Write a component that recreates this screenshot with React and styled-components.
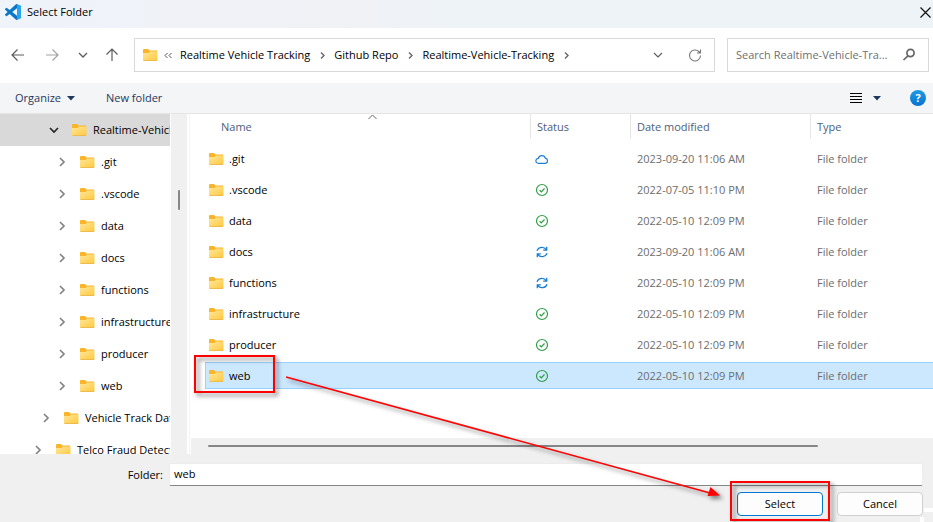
import React from "react";
import styled, { createGlobalStyle } from "styled-components";

const GlobalStyle = createGlobalStyle`
  *, *::before, *::after { box-sizing: border-box; }
  body { margin: 0; }
  button, input { font: inherit; color: inherit; }
  svg { flex: none; }
`;

const Dialog = styled.main`
  position: relative;
  display: flex;
  flex-direction: column;
  height: 100vh;
  overflow: hidden;
  background: #fff;
  color: #000;
  font: 11px/16px "Segoe UI", "Open Sans", "Noto Sans", sans-serif;
`;

const TitleBar = styled.header`
  display: flex;
  align-items: center;
  gap: 6px;
  height: 28px;
  padding: 0 2px 4px 5px;
  background: linear-gradient(90deg, #eff3fa, #f1f2f6 36%, #edf3f7 50%);
`;

const Title = styled.h1`
  flex: 1;
  margin: 0;
  font-size: inherit;
  font-weight: 400;
`;

const IconButton = styled.button`
  display: flex;
  align-items: center;
  justify-content: center;
  flex: none;
  width: ${(p) => p.$width || 16}px;
  height: 16px;
  padding: 0;
  border: 0;
  background: none;
  color: ${(p) => p.$color || "#5c5c5c"};
`;

const NavBar = styled.nav`
  display: flex;
  align-items: center;
  height: 55px;
  padding: 0 4px 1px 9px;
`;

const History = styled.div`
  display: flex;
  gap: 15px;
  width: 125px;
`;

const AddressBar = styled.div`
  display: flex;
  align-items: center;
  flex: 1;
  min-width: 0;
  height: 34px;
  margin-right: 12px;
  padding: 0 11px 0 8px;
  border: 1px solid #d9d9d9;
`;

const Crumbs = styled.ol`
  display: flex;
  align-items: center;
  flex: 1;
  min-width: 0;
  margin: 0 0 0 5px;
  padding: 0;
  overflow: hidden;
  list-style: none;
  white-space: nowrap;
`;

const Crumb = styled.li`
  display: flex;
  align-items: center;
  gap: 7px;
  margin-right: 6px;
`;

const CrumbLink = styled.a`
  color: #000;
  text-decoration: none;
`;

const AddressActions = styled.div`
  display: flex;
  gap: 21px;
`;

const SearchBox = styled.label`
  display: flex;
  align-items: center;
  gap: 8px;
  width: 202px;
  height: 34px;
  padding: 0 12px 0 8px;
  border: 1px solid #d9d9d9;
  color: #6b6b6b;
`;

const SearchInput = styled.input`
  flex: 1;
  min-width: 0;
  padding: 0;
  border: 0;
  outline: 0;
  background: none;
  text-overflow: ellipsis;
  &::placeholder { color: #6f6f6f; opacity: 1; }
`;

const Toolbar = styled.div`
  display: flex;
  align-items: center;
  height: 31px;
  padding: 0 7px 0 15px;
  border-bottom: 1px solid #e5e5e5;
  background: #f4f5f7;
`;

const ToolButton = styled.button`
  display: flex;
  align-items: center;
  gap: 6px;
  margin-right: 31px;
  padding: 0;
  border: 0;
  background: none;
  color: #1e395b;
`;

const ToolbarEnd = styled.div`
  display: flex;
  gap: 7px;
  margin-left: auto;
`;

const HelpButton = styled(IconButton)`
  margin-left: 20px;
  border-radius: 50%;
  background: linear-gradient(#1f9be4, #0873cf);
  color: #fff;
  font-weight: 700;
`;

const Browser = styled.div`
  display: flex;
  flex: 1;
  min-height: 0;
`;

const Tree = styled.ul`
  width: 170px;
  margin: 0;
  padding: 0;
  overflow: hidden;
  list-style: none;
`;

const TreeItem = styled.li`
  display: flex;
  align-items: center;
  height: 32px;
  padding-left: ${(p) => p.$indent}px;
  background: ${(p) => (p.$active ? "#d9d9d9" : "transparent")};
  white-space: nowrap;
`;

const TreeLabel = styled.span`
  margin-left: 6px;
`;

const Twisty = styled(IconButton)`
  margin-right: 12px;
`;

const TreeScroll = styled.div`
  width: 16px;
  margin-left: 1px;
  padding: 76px 7px 0 7px;
  background: #f0f0f0;
`;

const TreeThumb = styled.div`
  height: 20px;
  border-radius: 1px;
  background: #868686;
`;

const Splitter = styled.div`
  width: 4px;
  border-left: 2px solid #fff;
  border-right: 1px solid #fff;
  background: #f3f3f3;
`;

const FilePane = styled.section`
  display: flex;
  flex-direction: column;
  flex: 1;
  min-width: 0;
`;

const FileTable = styled.table`
  display: block;
  flex: 1;
  margin-left: 14px;
`;

const FileHead = styled.thead`
  position: relative;
  display: block;
`;

const FileBody = styled.tbody`
  display: grid;
  gap: 4px;
  padding-top: 6px;
`;

const Row = styled.tr`
  position: relative;
  display: grid;
  grid-template-columns: 325px 100px 180px 1fr;
`;

const HeadCell = styled.th`
  display: flex;
  align-items: center;
  height: 25px;
  padding-left: ${(p) => (p.$first ? 16 : 6)}px;
  border-left: ${(p) => (p.$first ? "0" : "1px solid #e5e5e5")};
  color: #4c607a;
  font-weight: 400;
`;

const SortMark = styled.span`
  position: absolute;
  top: 0;
  left: 163px;
  display: flex;
`;

const FileRow = styled(Row)`
  height: 27px;
  background: ${(p) => (p.$selected ? "#cce8ff" : "transparent")};
  box-shadow: ${(p) =>
    p.$selected ? "inset 1px 0 #99d1ff, inset 0 1px #99d1ff, inset 0 -1px #99d1ff" : "none"};
`;

const Cell = styled.td`
  display: flex;
  align-items: center;
  gap: 5px;
  padding: 0 0 0 ${(p) => p.$pad || 7}px;
  color: ${(p) => (p.$strong ? "#000" : "#6d6d6d")};
`;

const Callout = styled.span`
  position: absolute;
  inset: ${(p) => p.$inset};
  width: ${(p) => p.$width || "auto"};
  border: 2px solid #ff0000;
  filter: drop-shadow(3px 3px 2px rgba(0, 0, 0, 0.5));
  pointer-events: none;
`;

const FileScroll = styled.div`
  height: 16px;
  padding: 7px 115px 0 17px;
  background: #f0f0f0;
`;

const FileThumb = styled.div`
  height: 2px;
  border-radius: 1px;
  background: #868686;
`;

const Footer = styled.form`
  position: relative;
  display: flex;
  flex-direction: column;
  gap: 6px;
  height: 68px;
  padding: 9px 10px 0 0;
  background: #f0f0f0;
`;

const Field = styled.label`
  display: grid;
  grid-template-columns: 163px 1fr;
  align-items: center;
  column-gap: 6px;
`;

const FieldLabel = styled.span`
  text-align: right;
`;

const FieldInput = styled.input`
  height: 23px;
  min-width: 0;
  padding: 0 4px 2px;
  border: 1px solid #ececec;
  border-bottom-color: #868686;
  border-radius: 2px;
  outline: 0;
  background: #fff;
`;

const Actions = styled.div`
  display: flex;
  justify-content: flex-end;
  gap: 14px;
`;

const ActionButton = styled.button`
  position: relative;
  width: 86px;
  height: 24px;
  padding: 0;
  border: 1px solid ${(p) => (p.$primary ? "#0078d4" : "#d0d0d0")};
  border-radius: 4px;
  background: #fdfdfd;
`;

const Grip = styled.svg`
  position: absolute;
  right: 0;
  bottom: 0;
`;

const Pointer = styled.div`
  position: absolute;
  left: 286px;
  right: 213px;
  bottom: 26px;
  height: 120px;
  pointer-events: none;
  svg {
    display: block;
    width: 100%;
    height: 100%;
    overflow: visible;
    filter: drop-shadow(3px 3px 2px rgba(0, 0, 0, 0.5));
  }
`;

const Stroke = ({ d, size = 16, w = 1, color = "currentColor" }) => (
  <svg width={size} height={size} viewBox={`0 0 ${size} ${size}`} fill="none" stroke={color} strokeWidth={w} aria-hidden="true">
    <path d={d} />
  </svg>
);

const Caret = () => (
  <svg width="8" height="5" viewBox="0 0 8 5" aria-hidden="true">
    <path d="M0 0h8L4 4.5z" fill="#1e395b" />
  </svg>
);

const FolderIcon = () => (
  <svg width="15" height="12" viewBox="0 0 15 12" aria-hidden="true">
    <defs>
      <linearGradient id="folder" x1="0" y1="0" x2="1" y2="1">
        <stop offset="0" stopColor="#ffe79b" />
        <stop offset="1" stopColor="#ffc83d" />
      </linearGradient>
    </defs>
    <path d="M0 1q0-1 1-1h4l1.500 1.500H14V5H0z" fill="#f9b52a" />
    <path d="M0 4h5.500L7 2.500h7.500V11q0 1-1 1H1q-1 0-1-1z" fill="url(#folder)" />
    <path d="M.5 11.500h13.500" stroke="#eab54a" strokeWidth=".8" />
  </svg>
);

const CodeLogo = () => (
  <svg width="16" height="16" viewBox="0 0 24 24" aria-hidden="true">
    <path
      fill="#0a78c4"
      d="M23.15 2.587L18.21.21a1.494 1.494 0 0 0-1.705.29l-9.46 8.63-4.12-3.128a.999.999 0 0 0-1.276.057L.327 7.261A1 1 0 0 0 .326 8.74L3.899 12 .326 15.26a1 1 0 0 0 .001 1.479L1.65 17.94a.999.999 0 0 0 1.276.057l4.12-3.128 9.46 8.63a1.492 1.492 0 0 0 1.704.29l4.942-2.377A1.5 1.5 0 0 0 24 20.06V3.939a1.5 1.5 0 0 0-.85-1.352zm-5.146 14.861L10.826 12l7.178-5.448v10.896z"
    />
    <path fill="#27a5ee" d="M18 .2l5.150 2.387A1.500 1.500 0 0 1 24 3.940v16.120a1.500 1.500 0 0 1-.85 1.350L18 23.800z" />
  </svg>
);

const CloudIcon = () => (
  <svg width="14" height="12" viewBox="0 0 14 12" fill="none" stroke="#1b7fd6" strokeWidth="1.200" role="img" aria-label="Online only">
    <path d="M3.500 10.300a2.500 2.500 0 0 1-.2-5A3.700 3.700 0 0 1 10.400 5.200a2.600 2.600 0 0 1 .1 5.100z" />
  </svg>
);

const SyncedIcon = () => (
  <svg width="14" height="14" viewBox="0 0 14 14" fill="none" stroke="#2f9e44" strokeWidth="1.200" role="img" aria-label="Available">
    <circle cx="7" cy="7" r="5.500" />
    <path d="M4.600 7.200l1.700 1.600 3.200-3.300" />
  </svg>
);

const SyncingIcon = () => (
  <svg width="14" height="14" viewBox="0 0 14 14" fill="none" stroke="#1b7fd6" strokeWidth="1.300" role="img" aria-label="Syncing">
    <path d="M2 5.800C3.200 1.800 8.800 1 11.300 4.600M11.700 1.800v3.400H8.200M12 8.200C10.800 12.200 5.200 13 2.700 9.400M2.300 12.200V8.800h3.500" />
  </svg>
);

const statusIcons = { cloud: CloudIcon, synced: SyncedIcon, syncing: SyncingIcon };

const SMALL_RIGHT = "M4 2.500l3 3-3 3";

const tree = [
  { name: "Realtime-Vehicle-Tracking", indent: 48, open: true },
  { name: ".git", indent: 56 },
  { name: ".vscode", indent: 56 },
  { name: "data", indent: 56 },
  { name: "docs", indent: 56 },
  { name: "functions", indent: 56 },
  { name: "infrastructure", indent: 56 },
  { name: "producer", indent: 56 },
  { name: "web", indent: 56 },
  { name: "Vehicle Track Data", indent: 40 },
  { name: "Telco Fraud Detection", indent: 32 },
];

const files = [
  { name: ".git", status: "cloud", date: "2023-09-20 11:06 AM" },
  { name: ".vscode", status: "synced", date: "2022-07-05 11:10 PM" },
  { name: "data", status: "synced", date: "2022-05-10 12:09 PM" },
  { name: "docs", status: "syncing", date: "2023-09-20 11:06 AM" },
  { name: "functions", status: "syncing", date: "2022-05-10 12:09 PM" },
  { name: "infrastructure", status: "synced", date: "2022-05-10 12:09 PM" },
  { name: "producer", status: "synced", date: "2022-05-10 12:09 PM" },
  { name: "web", status: "synced", date: "2022-05-10 12:09 PM", selected: true },
];

const crumbs = ["Realtime Vehicle Tracking", "Github Repo", "Realtime-Vehicle-Tracking"];

export default function App() {
  return (
    <Dialog>
      <GlobalStyle />
      <TitleBar>
        <CodeLogo />
        <Title>Select Folder</Title>
        <IconButton aria-label="Close" $width={11} $color="#111">
          <Stroke size={11} d="M.5.5l10 10M10.500.5l-10 10" w={1.2} />
        </IconButton>
      </TitleBar>

      <NavBar>
        <History>
          <IconButton aria-label="Back" $width={18}>
            <Stroke d="M14 8H2.500M7.500 2.500L2 8l5.500 5.500" w={1.2} />
          </IconButton>
          <IconButton aria-label="Forward" $width={20} $color="#a3a3a3">
            <Stroke d="M2 8h11.500M8.500 2.500L14 8l-5.500 5.500" w={1.2} />
          </IconButton>
          <IconButton aria-label="Recent locations" $width={12}>
            <Stroke size={12} d="M2 4l4 4 4-4" w={1.3} />
          </IconButton>
          <IconButton aria-label="Up">
            <Stroke d="M8 14V2.500M2.500 7.500L8 2l5.500 5.500" w={1.2} />
          </IconButton>
        </History>
        <AddressBar>
          <FolderIcon />
          <Crumbs>
            <Crumb>
              <Stroke size={11} d="M4.500 3L2 5.500 4.500 8M8.500 3L6 5.500 8.500 8" color="#555" />
            </Crumb>
            {crumbs.map((name) => (
              <Crumb key={name}>
                <CrumbLink href="#">{name}</CrumbLink>
                <Stroke size={11} d={SMALL_RIGHT} w={1.4} color="#666" />
              </Crumb>
            ))}
          </Crumbs>
          <AddressActions>
            <IconButton aria-label="Previous locations">
              <Stroke size={12} d="M2 4l4 4 4-4" w={1.1} />
            </IconButton>
            <IconButton aria-label="Refresh">
              <Stroke d="M13.500 8.500A5.500 5.500 0 1 1 11.800 4.500L13.300 6M13.500 2.500V6H10" w={1.1} color="#777" />
            </IconButton>
          </AddressActions>
        </AddressBar>
        <SearchBox>
          <SearchInput type="text" aria-label="Search" placeholder="Search Realtime-Vehicle-Tra..." />
          <svg width="14" height="14" viewBox="0 0 14 14" fill="none" stroke="#666" strokeWidth="1.700" aria-hidden="true">
            <circle cx="8.500" cy="5" r="3.600" />
            <path d="M6 7.800L1.500 12" />
          </svg>
        </SearchBox>
      </NavBar>

      <Toolbar>
        <ToolButton>
          Organize
          <Caret />
        </ToolButton>
        <ToolButton>New folder</ToolButton>
        <ToolbarEnd>
          <IconButton aria-label="View" $color="#000">
            <Stroke size={12} d="M0 1.500h12M0 4.500h12M0 7.500h12M0 10.500h12" />
          </IconButton>
          <IconButton aria-label="View options" $width={12}>
            <Caret />
          </IconButton>
          <HelpButton aria-label="Help">?</HelpButton>
        </ToolbarEnd>
      </Toolbar>

      <Browser>
        <Tree>
          {tree.map((t) => (
            <TreeItem key={t.name} $indent={t.indent} $active={t.open}>
              <Twisty aria-label={`Toggle ${t.name}`} $width={12} $color={t.open ? "#222" : "#808080"}>
                <Stroke size={12} d={t.open ? "M2 4l4 4 4-4" : "M4 2l4 4-4 4"} w={1.6} />
              </Twisty>
              <FolderIcon />
              <TreeLabel>{t.name}</TreeLabel>
            </TreeItem>
          ))}
        </Tree>
        <TreeScroll>
          <TreeThumb />
        </TreeScroll>
        <Splitter />
        <FilePane>
          <FileTable>
            <FileHead>
              <Row>
                <HeadCell $first>
                  Name
                  <SortMark>
                    <Stroke size={9} d="M.5 5l4-4 4 4" color="#666" />
                  </SortMark>
                </HeadCell>
                <HeadCell>Status</HeadCell>
                <HeadCell>Date modified</HeadCell>
                <HeadCell>Type</HeadCell>
              </Row>
            </FileHead>
            <FileBody>
              {files.map((f) => {
                const Status = statusIcons[f.status];
                return (
                  <FileRow key={f.name} $selected={f.selected}>
                    <Cell $pad={4} $strong>
                      <FolderIcon />
                      {f.name}
                      {f.selected && <Callout $inset="-7px auto -4px -11px" $width="81px" />}
                    </Cell>
                    <Cell $pad={5}>
                      <Status />
                    </Cell>
                    <Cell>{f.date}</Cell>
                    <Cell>File folder</Cell>
                  </FileRow>
                );
              })}
            </FileBody>
          </FileTable>
          <FileScroll>
            <FileThumb />
          </FileScroll>
        </FilePane>
      </Browser>

      <Footer onSubmit={(e) => e.preventDefault()}>
        <Field>
          <FieldLabel>Folder:</FieldLabel>
          <FieldInput type="text" defaultValue="web" />
        </Field>
        <Actions>
          <ActionButton type="submit" $primary>
            Select
            <Callout $inset="-12px -8px -6px -8px" />
          </ActionButton>
          <ActionButton type="button">Cancel</ActionButton>
        </Actions>
        <Grip width="13" height="14" viewBox="0 0 13 14" fill="#fff" aria-hidden="true">
          <path d="M4 0h9v4H4zM0 9h4v5H0z" />
        </Grip>
      </Footer>

      <Pointer>
        <svg viewBox="0 0 434 120" preserveAspectRatio="none" aria-hidden="true">
          <path d="M0 1l424 116" stroke="#ff0000" strokeWidth="1.500" fill="none" />
          <path d="M434 119.500l-12.500.5 3-9z" fill="#ff0000" />
        </svg>
      </Pointer>
    </Dialog>
  );
}
